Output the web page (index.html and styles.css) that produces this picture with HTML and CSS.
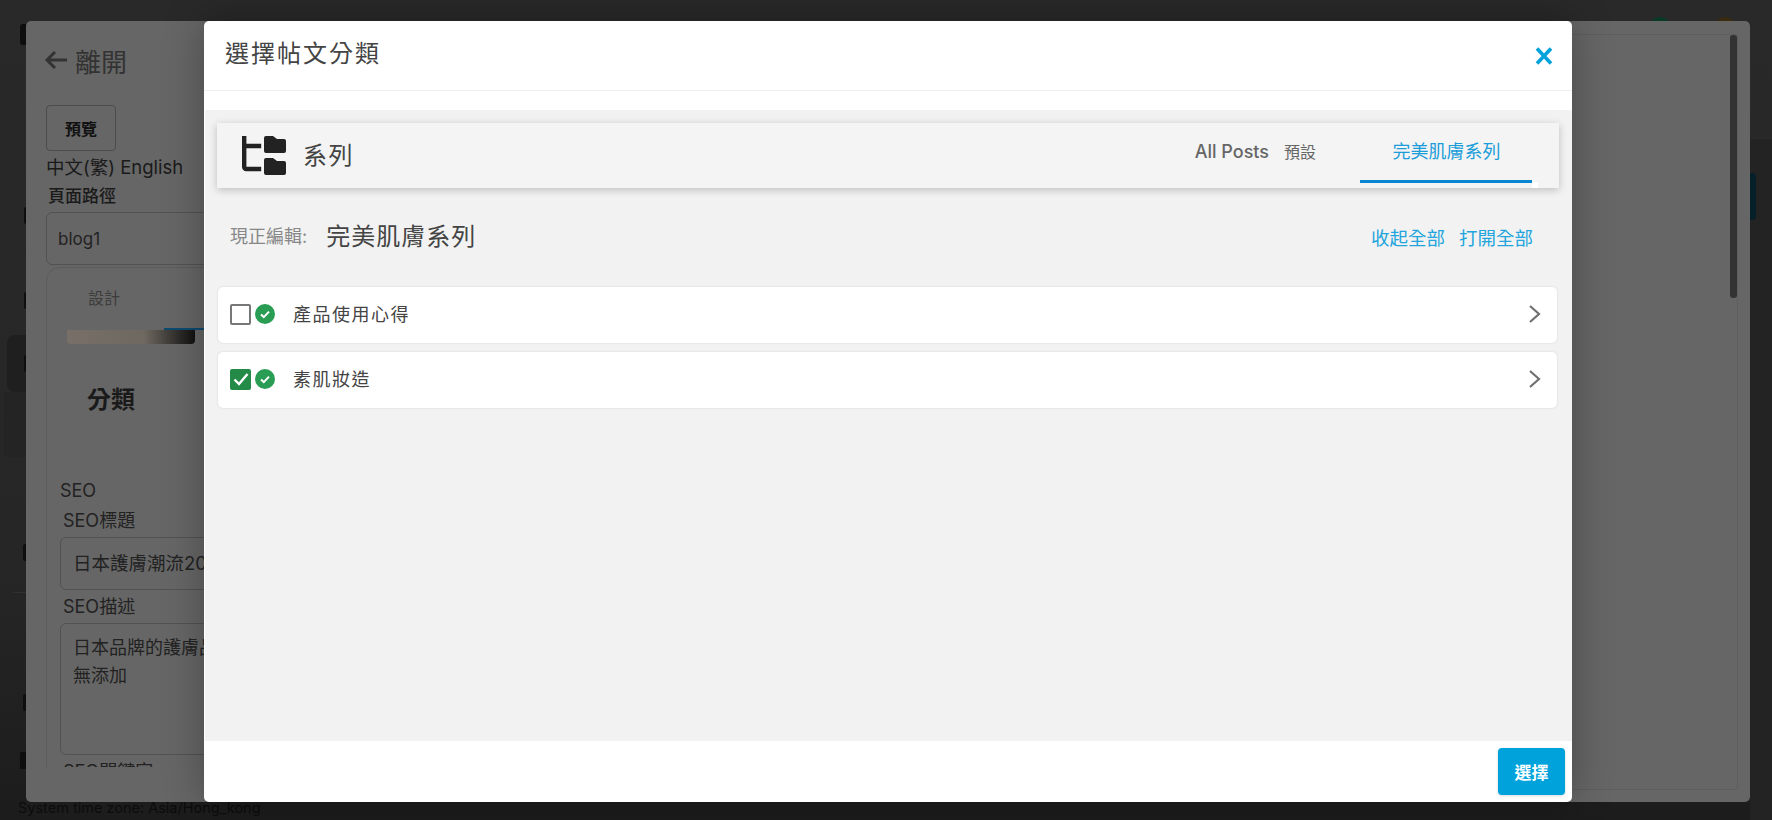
FILE: index.html
```html
<!DOCTYPE html>
<html lang="zh-Hant">
<head>
  <meta charset="UTF-8">
  <title>選擇帖文分類</title>
  <link rel="stylesheet" href="styles.css">
</head>
<body>
  <div class="page">
    <!-- admin page under the overlay, only its edges show -->
    <div class="sidebar">
      <div class="side-logo"></div>
      <div class="side-item"><i></i></div>
      <div class="side-item"><i></i></div>
      <div class="side-item selected"><i></i></div>
      <div class="side-band"></div>
      <div class="side-icon first"></div>
      <div class="side-line"></div>
      <div class="side-icon second"></div>
      <div class="side-icon third"></div>
    </div>
    <div class="dot green"></div>
    <div class="dot orange"></div>
    <div class="right-band"></div>
    <div class="right-tab"></div>
    <div class="timezone">System time zone: Asia/Hong_kong</div>

    <!-- editor window, dimmed -->
    <div class="editor">
      <div class="editor-left">
        <div class="leave">
          <svg class="leave-arrow" width="25" height="22" viewBox="0 0 25 22"><path d="M23 11H3M11 3l-8 8 8 8" fill="none" stroke="currentColor" stroke-width="3"/></svg>
          <span>離開</span>
        </div>
        <button class="preview-btn">預覽</button>
        <div class="langs">中文(繁) English</div>
        <div class="path-label">頁面路徑</div>
        <div class="path-input">blog1</div>
        <div class="editor-card">
          <div class="card-tabs">
            <span>設計</span>
            <div class="tab-line"></div>
          </div>
          <div class="card-strip"></div>
          <h2 class="card-title">分類</h2>
          <div class="seo-head">SEO</div>
          <div class="seo-label">SEO標題</div>
          <div class="seo-input">日本護膚潮流2024</div>
          <div class="seo-label">SEO描述</div>
          <div class="seo-area">日本品牌的護膚品<br>無添加</div>
          <div class="seo-label">SEO關鍵字</div>
        </div>
      </div>
      <div class="editor-right">
        <div class="scrollbar"></div>
      </div>
    </div>

    <!-- category modal -->
    <div class="modal">
      <div class="modal-header">
        <h1>選擇帖文分類</h1>
        <svg class="close" width="18" height="18" viewBox="0 0 18 18"><path d="M2 1.5l14 15M16 1.5l-14 15" fill="none" stroke="#00a2dc" stroke-width="3.6"/></svg>
      </div>
      <div class="modal-body">
        <div class="series-bar">
          <svg class="series-icon" width="44" height="39" viewBox="0 0 44 39">
            <path d="M2.2 0v31a2 2 0 0 0 2 2h15M2.2 10h17" fill="none" stroke="#222" stroke-width="4.4"/>
            <path d="M22 2a2 2 0 0 1 2-2h7l4 3h7a2 2 0 0 1 2 2v10a2 2 0 0 1-2 2H24a2 2 0 0 1-2-2zM22 24a2 2 0 0 1 2-2h7l4 3h7a2 2 0 0 1 2 2v10a2 2 0 0 1-2 2H24a2 2 0 0 1-2-2z" fill="#222"/>
          </svg>
          <span class="series-name">系列</span>
          <div class="series-tabs">
            <div class="series-tab">All Posts<small>預設</small></div>
            <div class="series-tab active">完美肌膚系列<span class="tab-end"></span></div>
          </div>
        </div>

        <div class="editing">
          <span class="editing-label">現正編輯:</span>
          <span class="editing-name">完美肌膚系列</span>
          <div class="editing-actions">
            <a>收起全部</a>
            <a>打開全部</a>
          </div>
        </div>

        <div class="cat-row">
          <span class="check"></span>
          <svg class="ok" width="20" height="20" viewBox="0 0 20 20"><circle cx="10" cy="10" r="10" fill="#2a9d55"/><path d="M6 10.5l2.8 2.6L14 7.6" fill="none" stroke="#fff" stroke-width="2"/></svg>
          <span class="cat-name">產品使用心得</span>
          <svg class="chevron" width="14" height="20" viewBox="0 0 14 20"><path d="M2 2l9 8-9 8" fill="none" stroke="#707070" stroke-width="2.2"/></svg>
        </div>
        <div class="cat-row">
          <span class="check checked"><svg width="16" height="14" viewBox="0 0 16 14"><path d="M1.5 7.5l4.5 4.5L14.5 2" fill="none" stroke="#fff" stroke-width="2.4"/></svg></span>
          <svg class="ok" width="20" height="20" viewBox="0 0 20 20"><circle cx="10" cy="10" r="10" fill="#2a9d55"/><path d="M6 10.5l2.8 2.6L14 7.6" fill="none" stroke="#fff" stroke-width="2"/></svg>
          <span class="cat-name">素肌妝造</span>
          <svg class="chevron" width="14" height="20" viewBox="0 0 14 20"><path d="M2 2l9 8-9 8" fill="none" stroke="#707070" stroke-width="2.2"/></svg>
        </div>
      </div>
      <div class="modal-footer">
        <button class="select-btn">選擇</button>
      </div>
    </div>
  </div>
</body>
</html>
```

FILE: styles.css
```css
* {
  box-sizing: border-box;
}

html,
body {
  margin: 0;
  height: 100%;
  overflow: hidden;
}

body {
  font-family: Inter, "Noto Sans CJK TC", sans-serif;
  color: #222;
}

.page {
  position: relative;
  width: 1772px;
  height: 820px;
  background: linear-gradient(#292929, #262626 70%, #1c1c1c);
  overflow: hidden;
}

/* page under the overlay */
.sidebar {
  width: 26px;
  padding-top: 24px;
}

.side-logo {
  width: 6px;
  height: 21px;
  margin-left: 20px;
  border-radius: 3px 0 0 3px;
  background: #0e0e0e;
}

.side-item {
  display: flex;
  align-items: center;
  justify-content: flex-end;
  height: 60px;
  margin: 0 0 25px 7px;
  border-radius: 8px 0 0 8px;
  background: #282828;
}

.side-item:nth-child(2) {
  margin-top: 140px;
}

.side-item:nth-child(3) {
  margin-bottom: 5px;
}

.side-item.selected {
  height: 57px;
  margin-bottom: 0;
  background: #1f1f1f;
}

.side-item i {
  width: 2px;
  height: 17px;
  border-radius: 2px 0 0 2px;
  background: #0e0e0e;
}

.side-band {
  height: 65px;
  margin-left: 4px;
  background: #242424;
}

.side-icon {
  width: 3px;
  height: 17px;
  margin-left: 23px;
  border-radius: 2px 0 0 2px;
  background: #0e0e0e;
}

.side-icon.first {
  margin-top: 87px;
}

.side-line {
  height: 1px;
  margin: 31px 0 0 13px;
  background: #303030;
}

.side-icon.second {
  margin-top: 101px;
}

.side-icon.third {
  width: 6px;
  margin: 41px 0 0 20px;
}

.dot {
  position: absolute;
  top: 17px;
  width: 24px;
  height: 24px;
  border-radius: 50%;
}

.dot.green {
  left: 1648px;
  background: #0a3a26;
}

.dot.orange {
  left: 1714px;
  width: 22px;
  background: #3a2a10;
}

.right-band {
  position: absolute;
  top: 139px;
  right: 0;
  width: 22px;
  height: 681px;
  background: #232323;
}

.right-tab {
  position: absolute;
  top: 173px;
  left: 1750px;
  width: 6px;
  height: 47px;
  border-radius: 0 4px 4px 0;
  background: #06202a;
}

.timezone {
  position: absolute;
  left: 18px;
  bottom: 4px;
  font-size: 14.5px;
  color: #0c0c0c;
}

/* dimmed editor behind the modal */
.editor {
  position: absolute;
  left: 26px;
  top: 21px;
  width: 1724px;
  height: 781px;
  display: flex;
  background: #666;
  border-radius: 5px;
  overflow: hidden;
}

.editor-left {
  width: 600px;
  height: 746px;
  padding: 17px 0 0 20px;
  overflow: hidden;
}

.leave {
  display: flex;
  align-items: center;
  gap: 6px;
  height: 44px;
  font-size: 26px;
  color: #333;
}

.leave-arrow {
  color: #333;
  margin-left: -2px;
}

.preview-btn {
  display: block;
  width: 70px;
  height: 46px;
  margin-top: 23px;
  background: transparent;
  border: 1px solid #4c4c4c;
  border-radius: 4px;
  font-family: inherit;
  font-size: 16px;
  font-weight: 700;
  color: #111;
}

.langs {
  font-size: 18.5px;
  line-height: 26px;
  margin-top: 3px;
  color: #1a1a1a;
}

.path-label {
  font-size: 17px;
  line-height: 26px;
  margin: 3px 0 3px 2px;
  font-weight: 500;
  color: #1a1a1a;
}

.path-input {
  height: 53px;
  padding: 0 11px;
  line-height: 53px;
  font-size: 17px;
  border: 1px solid #525252;
  border-radius: 6px;
  color: #222;
}

.editor-card {
  height: 520px;
  margin-top: 2px;
  padding: 0 13px;
  border: 1px solid #5c5c5c;
  border-radius: 14px;
  overflow: hidden;
}

.card-tabs {
  position: relative;
  height: 62px;
  padding: 17px 0 0 28px;
  font-size: 16px;
  color: #3c3c3c;
}

.tab-line {
  position: absolute;
  left: 104px;
  bottom: 0;
  width: 73px;
  height: 2px;
  background: #0d4a70;
}

.card-strip {
  width: 128px;
  height: 14px;
  margin-left: 7px;
  border-radius: 0 0 4px 4px;
  background: linear-gradient(90deg, #787068, #6e6860 60%, #111 100%);
}

.card-title {
  margin: 38px 0 0 27px;
  font-size: 24px;
  line-height: 36px;
  font-weight: 700;
  color: #1a1a1a;
}

.seo-head {
  margin-top: 60px;
  font-size: 18px;
  line-height: 26px;
  color: #222;
}

.seo-label {
  margin: 4px 0 3px 3px;
  font-size: 18px;
  line-height: 26px;
  color: #222;
}

.seo-input {
  width: 500px;
  height: 53px;
  padding: 0 12px;
  line-height: 51px;
  font-size: 18.5px;
  border: 1px solid #525252;
  border-radius: 6px;
}

.seo-area {
  width: 500px;
  height: 132px;
  padding: 10px 12px;
  line-height: 28px;
  font-size: 18px;
  border: 1px solid #525252;
  border-radius: 6px;
}

.editor-right {
  position: relative;
  flex: 1;
  margin: 13px 12px 12px 0;
  border: 1px solid #5e5e5e;
  border-radius: 3px;
}

.scrollbar {
  position: absolute;
  top: 0;
  right: 0;
  width: 7px;
  height: 263px;
  border-radius: 3px;
  background: #333;
}

/* modal */
.modal {
  position: absolute;
  left: 204px;
  top: 21px;
  width: 1368px;
  height: 781px;
  display: flex;
  flex-direction: column;
  background: #fff;
  border-radius: 5px;
  box-shadow: 0 0 40px rgba(0, 0, 0, 0.3);
}

.modal-header {
  display: flex;
  align-items: center;
  justify-content: space-between;
  height: 70px;
  flex: none;
  padding: 0 19px 9px 21px;
  border-bottom: 1px solid #eee;
}

.modal-header h1 {
  margin: 0;
  font-size: 24px;
  font-weight: 400;
  letter-spacing: 2px;
  color: #444;
}

.close {
  margin-top: 9px;
}

.modal-body {
  flex: 1;
  margin: 19px 0 0 1px;
  padding: 13px 13px 0 12px;
  background: #f2f2f2;
}

.series-bar {
  display: flex;
  align-items: center;
  height: 65px;
  padding-left: 25px;
  background: #f4f4f4;
  box-shadow: 0 2px 8px rgba(0, 0, 0, 0.22);
}

.series-name {
  margin-left: 17px;
  padding-bottom: 4px;
  font-size: 24px;
  letter-spacing: 1.5px;
  color: #444;
}

.series-tabs {
  display: flex;
  align-items: flex-start;
  height: 100%;
  margin-left: auto;
  margin-right: 27px;
}

.series-tab {
  display: flex;
  align-items: center;
  height: 52px;
  padding-top: 4px;
  font-size: 18px;
  font-weight: 500;
  color: #666;
}

.series-tab small {
  margin-left: 15px;
  font-size: 16px;
  font-weight: 400;
}

.series-tab.active {
  position: relative;
  justify-content: center;
  width: 172px;
  height: 60px;
  margin-left: 44px;
  padding: 0 0 4px 1px;
  font-size: 18px;
  font-weight: 400;
  color: #1a9dd9;
  border-bottom: 3px solid #0a86d0;
}

.tab-end {
  position: absolute;
  right: -6px;
  bottom: -8px;
  width: 6px;
  height: 6px;
  background: #fff;
}

.editing {
  display: flex;
  align-items: center;
  height: 99px;
  padding: 0 26px 6px 13px;
}

.editing-label {
  font-size: 18px;
  color: #888;
}

.editing-name {
  margin-left: 19px;
  font-size: 24px;
  letter-spacing: 1px;
  color: #444;
}

.editing-actions {
  display: flex;
  gap: 14px;
  margin-left: auto;
  padding-top: 4px;
  font-size: 18.5px;
  color: #22a5dc;
}

.cat-row {
  display: flex;
  align-items: center;
  height: 56px;
  margin: 0 2px 9px 1px;
  padding: 0 15px 2px 12px;
  background: #fff;
  border-radius: 5px;
  box-shadow: 0 0 2px rgba(90, 130, 130, 0.25);
}

.check {
  display: flex;
  align-items: center;
  justify-content: center;
  width: 21px;
  height: 21px;
  border: 2px solid #777;
  border-radius: 2px;
}

.check.checked {
  background: #248a48;
  border-color: #248a48;
}

.ok {
  margin-left: 4px;
}

.cat-name {
  margin-left: 18px;
  padding-bottom: 2px;
  font-size: 18px;
  letter-spacing: 1.5px;
  color: #444;
}

.chevron {
  margin-left: auto;
}

.modal-footer {
  display: flex;
  justify-content: flex-end;
  align-items: flex-start;
  height: 61px;
  flex: none;
  padding: 7px 7px 0 0;
}

.select-btn {
  width: 67px;
  height: 47px;
  background: #00a2db;
  border: 0;
  border-radius: 4px;
  font-family: inherit;
  font-size: 17px;
  font-weight: 700;
  color: #fff;
  box-shadow: 0 1px 3px rgba(0, 0, 0, 0.15);
}
```
